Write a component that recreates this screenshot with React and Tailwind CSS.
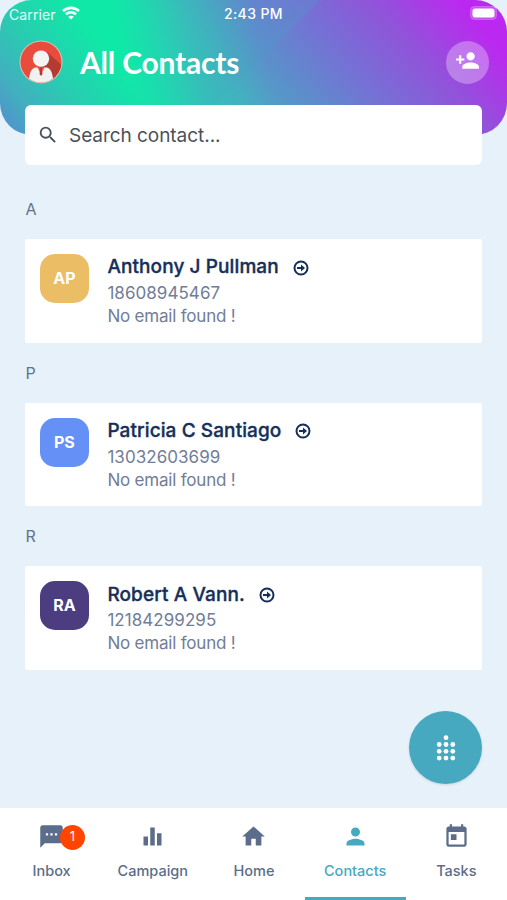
import React, { useState } from "react";
import {
  MdEqualizer,
  MdHome,
  MdPerson,
  MdPersonAdd,
  MdSearch,
  MdSms,
  MdToday,
} from "react-icons/md";

const contacts = [
  { id: 1, letter: "A", initials: "AP", name: "Anthony J Pullman", phone: "18608945467", color: "bg-[#ebbe66]", nameWidth: "w-[172px]" },
  { id: 2, letter: "P", initials: "PS", name: "Patricia C Santiago", phone: "13032603699", color: "bg-[#6590f6]", nameWidth: "w-[174.5px]" },
  { id: 3, letter: "R", initials: "RA", name: "Robert A Vann.", phone: "12184299295", color: "bg-[#4c3d80]", nameWidth: "w-[138px]" },
];

const tabs = [
  { label: "Inbox", icon: MdSms, badge: 1 },
  { label: "Campaign", icon: MdEqualizer },
  { label: "Home", icon: MdHome },
  { label: "Contacts", icon: MdPerson },
  { label: "Tasks", icon: MdToday },
];

// dial pad dots, column / row
const dots = [
  [1, 0],
  [0, 1], [1, 1], [2, 1],
  [0, 2], [1, 2], [2, 2],
  [0, 3], [1, 3], [2, 3],
];

const StatusBar = () => (
  <div className="flex h-7 items-center justify-between pl-[9px] pr-[9px] text-white">
    <div className="flex w-[200px] items-center gap-[6px]">
      <span className="text-[14px] tracking-[0.1px] opacity-90">Carrier</span>
      <svg viewBox="0 0 18 14" className="-mt-[2px] h-[14px] w-[18px]" fill="none" stroke="currentColor" strokeWidth="2.6">
        <path d="M1 5 C5.5 .8 12.5 .8 17 5" />
        <path d="M4 8.3 C7 5.7 11 5.7 14 8.3" />
        <path d="M9 13.6 L6.2 10.7 C7.8 9.4 10.2 9.4 11.8 10.7 Z" fill="currentColor" stroke="none" />
      </svg>
    </div>
    <span className="pb-px text-[14px] font-medium tracking-[0.4px] whitespace-nowrap">2:43 PM</span>
    <div className="flex w-[200px] justify-end pb-[2px]">
      <svg viewBox="0 0 28 14" className="h-[14px] w-7">
        <rect x=".5" y=".5" width="26" height="13" rx="4" fill="#fff" fillOpacity=".2" stroke="#fff" strokeOpacity=".2" />
        <rect x="2.5" y="2.5" width="22" height="9" rx="2.5" fill="#fff" />
      </svg>
    </div>
  </div>
);

const ProfileImage = () => (
  <svg viewBox="0 0 44 44" className="h-11 w-11">
    <defs>
      <clipPath id="profile">
        <circle cx="22" cy="22" r="20.5" />
      </clipPath>
    </defs>
    <circle cx="22" cy="22" r="21.5" fill="#d9c3b4" />
    <g clipPath="url(#profile)">
      <rect width="44" height="44" fill="#e94b3d" />
      <path d="M28 12 L44 26 V44 H34 L24 26 Z" fill="#b43b31" />
      <path d="M9.5 44 C10 36 11 29 16 27.5 L28 27.5 C33 29 34 36 34.5 44 Z" fill="#f1f1f1" />
      <path d="M18.5 27 L22 35 L25.5 27 Z" fill="#e94b3d" />
      <path d="M20.8 27.5 h2.4 l-.5 2 .8 4.5 -1.5 2 -1.5 -2 .8 -4.5 Z" fill="#b5382d" />
      <circle cx="22" cy="18.6" r="8.2" fill="#f4f4f4" />
    </g>
  </svg>
);

const ArrowCircle = () => (
  <svg viewBox="0 0 16 16" className="h-4 w-4 shrink-0 text-[#152f59]" fill="none" stroke="currentColor" strokeWidth="2">
    <circle cx="8" cy="8" r="6.5" />
    <path d="M4 8 H9" />
    <path d="M8 4.6 L12 8 L8 11.4 Z" fill="currentColor" stroke="none" />
  </svg>
);

const ContactCard = ({ contact }) => (
  <section>
    <h2 className="h-[60px] pt-[18px] text-[16px] leading-6 text-[#64718f]">{contact.letter}</h2>
    <div className="flex h-[103.7px] rounded-[2px] bg-white px-[14.5px] pt-[15px]">
      <div className={`flex h-[49px] w-[49px] shrink-0 items-center justify-center rounded-[15px] pb-px text-[16px] font-bold text-white ${contact.color}`}>
        {contact.initials}
      </div>
      <div className="ml-[18.5px]">
        <div className="flex h-[27px] items-center gap-[13.5px] text-[19px] font-medium text-[#152f59]">
          <span className={`whitespace-nowrap tracking-[0.1px] [-webkit-text-stroke:0.35px] ${contact.nameWidth}`}>{contact.name}</span>
          <ArrowCircle />
        </div>
        <p className="h-[23px] text-[17px] leading-[25px] tracking-[0.05px] text-[#717d98]">{contact.phone}</p>
        <p className="text-[17px] leading-[25px] tracking-[-0.2px] whitespace-nowrap text-[#717d98]">No email found !</p>
      </div>
    </div>
  </section>
);

const App = () => {
  const [active, setActive] = useState("Contacts");
  const [search, setSearch] = useState("");

  return (
    <div className="flex h-[900px] w-[507px] flex-col overflow-hidden bg-[#e6f1fa] font-['Inter',sans-serif]">
      <header className="h-[135px] shrink-0 rounded-[32px] bg-[linear-gradient(51deg,#528fce_1%,rgba(72,168,194,0.9)_8%,rgba(48,195,180,0.75)_17%,rgba(16,232,168,0)_29%),linear-gradient(78deg,#0fe9a7_0%,#0fe9a7_26%,rgba(20,228,170,0.85)_31%,rgba(20,228,170,0.4)_39%,rgba(20,228,170,0)_52%),linear-gradient(135deg,rgba(80,152,200,0)_32%,rgba(80,152,200,0.35)_49.4%,rgba(80,152,200,0)_50.6%),linear-gradient(49deg,#45b0c0_35%,#4ea4c4_45%,#5c8ecb_54%,#7670d5_66%,#9252da_79%,#bb29f0_92%)]">
        <StatusBar />
        <div className="flex items-center pt-[12px] pr-[18px] pl-[18.5px]">
          <ProfileImage />
          <h1 className="ml-[17.5px] flex-1 font-['Lato',sans-serif] text-[30px] leading-[44px] font-bold tracking-[-0.2px] text-white">All Contacts</h1>
          <button className="flex h-[43px] w-[43px] items-center justify-center rounded-full bg-white/30 pb-[3px] text-white">
            <MdPersonAdd size={25} />
          </button>
        </div>
      </header>

      <main className="relative -mt-[30px] flex-1 px-[25px]">
        <label className="flex h-[60px] items-center rounded-[6px] bg-white pl-[11.5px]">
          <MdSearch size={22} className="text-[#4b5158]" />
          <input
            value={search}
            onChange={(e) => setSearch(e.target.value)}
            placeholder="Search contact..."
            className="mt-[2px] ml-[10.5px] w-[300px] text-[19px] tracking-[-0.05px] text-[#4b5158] outline-none placeholder:text-[#4b5158]"
          />
        </label>
        <div className="px-[0.4px] pt-[14px]">
          {contacts.map((contact) => (
            <ContactCard key={contact.id} contact={contact} />
          ))}
        </div>
        <button className="absolute right-[25px] bottom-[24px] flex h-[73px] w-[73px] items-center justify-center rounded-full bg-[#46a9c0] shadow-sm">
          <svg viewBox="0 0 20 26" className="h-[26px] w-5" fill="#fff">
            {dots.map(([x, y]) => (
              <circle key={`${x}-${y}`} cx={3.2 + x * 6.8} cy={2.7 + y * 6.8} r="2.4" />
            ))}
          </svg>
        </button>
      </main>

      <nav className="flex h-[92px] shrink-0 bg-white pl-px">
        {tabs.map(({ label, icon: Icon, badge }) => (
          <button
            key={label}
            onClick={() => setActive(label)}
            className={`relative flex w-[101.2px] flex-col items-center border-b-[3px] pt-[15px] ${
              active === label ? "border-[#46a9c0] text-[#46a9c0]" : "border-transparent text-[#5b6d8b]"
            }`}
          >
            <Icon size={27} />
            <span className="mt-[11px] text-[14.5px] leading-5 font-medium">{label}</span>
            {badge && (
              <span className="absolute top-[17px] left-[59px] flex h-[25px] w-[25px] items-center justify-center rounded-full bg-[#ff4500] pb-px text-[13px] text-white">
                {badge}
              </span>
            )}
          </button>
        ))}
      </nav>
    </div>
  );
};

export default App;
